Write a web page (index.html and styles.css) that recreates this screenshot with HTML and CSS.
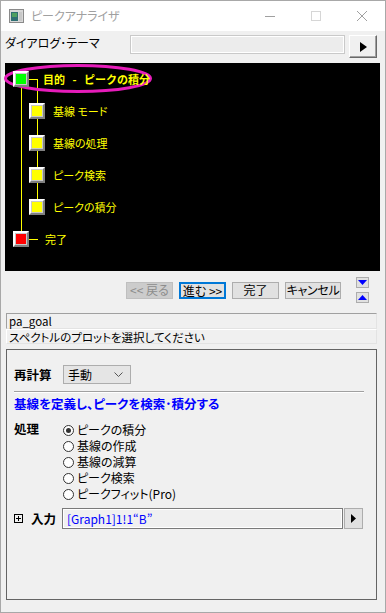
FILE: index.html
```html
<!DOCTYPE html>
<html lang="ja">
<head>
    <meta charset="UTF-8">
    <title>ピークアナライザ</title>
    <link rel="stylesheet" href="styles.css">
</head>
<body>
    <div class="window">
        <div class="titlebar">
            <svg class="app-icon" width="15" height="14" viewBox="0 0 15 14">
                <rect x="0.5" y="0.5" width="14" height="13" fill="#d8d8d8" stroke="#8a8a8a"/>
                <rect x="2" y="3" width="7" height="9" fill="#2f6f73"/>
                <rect x="3" y="4" width="5" height="4" fill="#4fa060"/>
                <rect x="10" y="3" width="3" height="9" fill="#c8c8c8"/>
            </svg>
            <span class="title">ピークアナライザ</span>
            <div class="caption-buttons">
                <svg width="46" height="30" viewBox="0 0 46 30"><line x1="18" y1="15.5" x2="28" y2="15.5" stroke="#a0a0a0"/></svg>
                <svg width="46" height="30" viewBox="0 0 46 30"><rect x="18.5" y="10.5" width="9" height="9" fill="none" stroke="#d6d6d6"/></svg>
                <svg width="46" height="30" viewBox="0 0 46 30"><path d="M18 10 L28 20 M28 10 L18 20" stroke="#a0a0a0"/></svg>
            </div>
        </div>

        <div class="content">
            <div class="theme-row">
                <span class="theme-label">ダイアログ･テーマ</span>
                <div class="theme-box"></div>
                <button class="arrow-btn">
                    <svg width="7" height="10" viewBox="0 0 7 10"><path d="M0 0 L7 5 L0 10 Z" fill="#000"/></svg>
                </button>
            </div>

            <div class="tree">
                <svg class="tree-lines" width="375" height="208" viewBox="0 0 375 208">
                    <line x1="16.5" y1="24" x2="16.5" y2="168" stroke="#ffff00"/>
                    <line x1="24" y1="16.5" x2="33" y2="16.5" stroke="#ffff00"/>
                    <line x1="32.5" y1="16" x2="32.5" y2="151" stroke="#ffff00"/>
                    <line x1="24" y1="176.5" x2="33" y2="176.5" stroke="#ffff00"/>
                    <ellipse cx="73" cy="15.5" rx="72.5" ry="13" fill="none" stroke="#e61cba" stroke-width="3"/>
                </svg>
                <div class="node-row top">
                    <span class="node"><i class="green"></i></span>
                    <span class="node-label goal">目的&nbsp;-&nbsp;ピークの積分</span>
                </div>
                <div class="node-row child">
                    <span class="node"><i class="yellow"></i></span>
                    <span class="node-label">基線 モード</span>
                </div>
                <div class="node-row child">
                    <span class="node"><i class="yellow"></i></span>
                    <span class="node-label">基線の処理</span>
                </div>
                <div class="node-row child">
                    <span class="node"><i class="yellow"></i></span>
                    <span class="node-label">ピーク検索</span>
                </div>
                <div class="node-row child">
                    <span class="node"><i class="yellow"></i></span>
                    <span class="node-label">ピークの積分</span>
                </div>
                <div class="node-row top">
                    <span class="node"><i class="red"></i></span>
                    <span class="node-label done">完了</span>
                </div>
            </div>

            <div class="nav-row">
                <button class="btn" disabled>&lt;&lt; 戻る</button>
                <button class="btn focused">進む &gt;&gt;</button>
                <button class="btn">完了</button>
                <button class="btn wide">キャンセル</button>
                <div class="updown">
                    <button class="tiny-btn">
                        <svg width="9" height="5" viewBox="0 0 9 5"><path d="M0 0 L9 0 L4.5 5 Z" fill="#0000ff"/></svg>
                    </button>
                    <button class="tiny-btn">
                        <svg width="9" height="5" viewBox="0 0 9 5"><path d="M0 5 L9 5 L4.5 0 Z" fill="#0000ff"/></svg>
                    </button>
                </div>
            </div>

            <div class="goal-name">pa_goal</div>
            <div class="goal-hint">スペクトルのプロットを選択してください</div>

            <div class="panel">
                <div class="form-row">
                    <span class="field-label">再計算</span>
                    <div class="select">
                        <span>手動</span>
                        <svg width="9" height="5" viewBox="0 0 9 5"><path d="M0.5 0.5 L4.5 4.5 L8.5 0.5" fill="none" stroke="#555"/></svg>
                    </div>
                </div>
                <div class="separator"></div>
                <div class="panel-heading">基線を定義し、ピークを検索･積分する</div>
                <div class="process">
                    <span class="field-label">処理</span>
                    <div class="radios">
                        <label class="radio"><span class="dot checked"></span>ピークの積分</label>
                        <label class="radio"><span class="dot"></span>基線の作成</label>
                        <label class="radio"><span class="dot"></span>基線の減算</label>
                        <label class="radio"><span class="dot"></span>ピーク検索</label>
                        <label class="radio"><span class="dot"></span>ピークフィット(Pro)</label>
                    </div>
                </div>
                <div class="input-row">
                    <svg class="expand" width="9" height="9" viewBox="0 0 9 9">
                        <rect x="0.5" y="0.5" width="8" height="8" fill="none" stroke="#000"/>
                        <path d="M2 4.5 H7 M4.5 2 V7" stroke="#000"/>
                    </svg>
                    <span class="field-label short">入力</span>
                    <div class="input-box">[Graph1]1!1“B”</div>
                    <button class="input-btn">
                        <svg width="5" height="9" viewBox="0 0 5 9"><path d="M0 0 L5 4.5 L0 9 Z" fill="#000"/></svg>
                    </button>
                </div>
            </div>
        </div>
    </div>
</body>
</html>
```

FILE: styles.css
```css
body {
    margin: 0;
    font-family: "Noto Sans CJK JP", "Noto Sans", sans-serif;
    font-feature-settings: "palt";
    font-size: 12px;
    color: #000;
    background: #f0f0f0;
}

.window {
    width: 386px;
    height: 613px;
    box-sizing: border-box;
    border: 1px solid #a8a8a8;
    background: #f0f0f0;
    overflow: hidden;
}

.titlebar {
    height: 30px;
    background: #fff;
    display: flex;
    align-items: center;
}

.app-icon {
    margin-left: 8px;
}

.title {
    margin-left: 7px;
    color: #a0a0a0;
    font-size: 12px;
    line-height: 14px;
}

.caption-buttons {
    margin-left: auto;
    display: flex;
}

.caption-buttons svg {
    display: block;
}

.content {
    padding-left: 4px;
}

.theme-row {
    display: flex;
    align-items: flex-start;
    padding-top: 4px;
    height: 23px;
}

.theme-label {
    width: 125px;
    line-height: 14px;
    padding-top: 1px;
}

.theme-box {
    width: 213px;
    height: 17px;
    border: 1px solid #c9c9c9;
    box-shadow: inset 0 0 0 1px #fff;
    background: #ececec;
}

.arrow-btn {
    margin-left: 4px;
    width: 28px;
    height: 23px;
    padding: 0;
    border: 1px solid;
    border-color: #fff #696969 #696969 #fff;
    box-shadow: inset -1px -1px 0 #a0a0a0;
    background: #f0f0f0;
    display: flex;
    align-items: center;
    justify-content: center;
}

.tree {
    position: relative;
    margin-top: 5px;
    width: 375px;
    height: 208px;
    background: #000;
}

.tree-lines {
    position: absolute;
    left: 0;
    top: 0;
    overflow: visible;
}

.node-row {
    position: relative;
    height: 32px;
    display: flex;
    align-items: center;
}

.node-row.top {
    padding-left: 8px;
}

.node-row.child {
    padding-left: 24px;
}

.node {
    width: 16px;
    height: 16px;
    box-sizing: border-box;
    border: 2px solid;
    border-color: #fff #808080 #808080 #fff;
    background: #c8c8c8;
    padding: 1px;
    display: flex;
}

.node i {
    flex: 1;
}

.green { background: #00ff00; }
.yellow { background: #ffff00; }
.red { background: #ff0000; }

.node-label {
    margin-left: 8px;
    color: #ffff00;
    font-size: 11px;
    line-height: 14px;
}

.node-label.goal {
    margin-left: 14px;
    font-weight: bold;
    font-feature-settings: normal;
    word-spacing: 5px;
}

.node-label.done {
    margin-left: 16px;
}

.nav-row {
    display: flex;
    align-items: center;
    margin-top: 6px;
    padding-left: 121px;
}

.btn {
    width: 47px;
    height: 17px;
    padding: 0;
    margin-right: 6px;
    box-sizing: border-box;
    border: 1px solid #adadad;
    background: #e1e1e1;
    font-family: inherit;
    font-feature-settings: "palt";
    font-size: 12px;
    line-height: 14px;
    color: #000;
    white-space: nowrap;
}

.btn:disabled {
    background: #cccccc;
    border-color: #bfbfbf;
    color: #8c8c8c;
}

.btn.focused {
    border: 2px solid #0078d7;
}

.btn.wide {
    width: 56px;
    margin-right: 15px;
    letter-spacing: -0.3px;
}

.updown {
    display: flex;
    flex-direction: column;
    gap: 4px;
}

.tiny-btn {
    width: 13px;
    height: 11px;
    padding: 0;
    box-sizing: border-box;
    border: 1px solid #adadad;
    background: #e1e1e1;
    display: flex;
    align-items: center;
    justify-content: center;
}

.goal-name,
.goal-hint {
    width: 371px;
    box-sizing: border-box;
    margin-left: 1px;
    padding-left: 2px;
    line-height: 14px;
    font-size: 11.5px;
}

.goal-name {
    margin-top: 10px;
    height: 16px;
    border: 1px solid;
    border-color: #a0a0a0 #e3e3e3 #e3e3e3 #a0a0a0;
}

.goal-hint {
    height: 15px;
    border: 1px solid;
    border-color: #fff #e3e3e3 #e3e3e3 #fff;
}

.panel {
    margin-top: 5px;
    margin-left: 1px;
    width: 371px;
    height: 251px;
    box-sizing: border-box;
    border: 1px solid #646464;
    padding: 15px 12px 0 7px;
}

.form-row {
    display: flex;
    align-items: center;
    height: 19px;
}

.field-label {
    width: 49px;
    font-weight: bold;
    font-size: 12.5px;
    line-height: 16px;
}

.select {
    width: 68px;
    height: 19px;
    box-sizing: border-box;
    border: 1px solid #adadad;
    background: #e5e5e5;
    display: flex;
    align-items: center;
    padding: 0 7px 0 4px;
    justify-content: space-between;
}

.separator {
    margin-top: 7px;
    border-top: 1px solid #a0a0a0;
    border-bottom: 1px solid #fff;
}

.panel-heading {
    margin-top: 2px;
    line-height: 18px;
    font-size: 12.5px;
    font-weight: bold;
    color: #0000ff;
}

.process {
    display: flex;
    margin-top: 9px;
}

.process .field-label {
    line-height: 14px;
}

.radios {
    display: flex;
    flex-direction: column;
}

.radio {
    height: 16px;
    display: flex;
    align-items: center;
    line-height: 14px;
}

.dot {
    width: 11px;
    height: 11px;
    box-sizing: border-box;
    border: 1px solid #333;
    border-radius: 50%;
    background: #fff;
    margin-right: 3px;
    display: flex;
    align-items: center;
    justify-content: center;
}

.dot.checked::after {
    content: "";
    width: 5px;
    height: 5px;
    border-radius: 50%;
    background: #333;
}

.input-row {
    display: flex;
    align-items: center;
    margin-top: 6px;
    height: 21px;
}

.expand {
    margin-right: 8px;
}

.field-label.short {
    width: 31px;
}

.input-box {
    width: 281px;
    height: 21px;
    box-sizing: border-box;
    border: 1px solid #7a7a7a;
    box-shadow: inset 0 0 0 1px #fff;
    background: #f0f0f0;
    color: #0000ff;
    padding-left: 4px;
    line-height: 19px;
    font-size: 12px;
}

.input-btn {
    width: 19px;
    height: 21px;
    padding: 0;
    margin-left: 1px;
    border: 1px solid #adadad;
    background: #e1e1e1;
    display: flex;
    align-items: center;
    justify-content: center;
}
```
